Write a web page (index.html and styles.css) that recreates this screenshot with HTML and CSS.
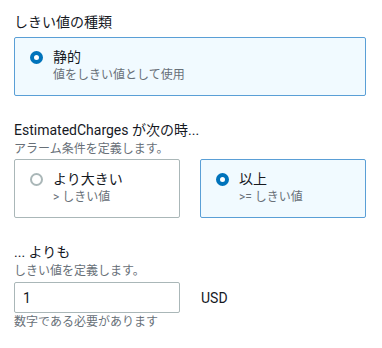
FILE: index.html
```html
<!DOCTYPE html>
<html lang="ja">

<head>
    <meta charset="UTF-8">
    <meta name="viewport" content="width=device-width, initial-scale=1.0">
    <title>しきい値</title>
    <link rel="stylesheet" href="styles.css">
</head>

<body>
    <div class="form">
        <div class="field">
            <div class="field-label first">しきい値の種類</div>
            <div class="tiles single">
                <label class="tile selected">
                    <span class="radio checked"></span>
                    <span class="tile-text">
                        <span class="tile-title">静的</span>
                        <span class="tile-sub">値をしきい値として使用</span>
                    </span>
                </label>
            </div>
        </div>

        <div class="field">
            <div class="field-label">EstimatedCharges が次の時...</div>
            <div class="field-desc">アラーム条件を定義します。</div>
            <div class="tiles">
                <label class="tile">
                    <span class="radio"></span>
                    <span class="tile-text">
                        <span class="tile-title">より大きい</span>
                        <span class="tile-sub">&gt; しきい値</span>
                    </span>
                </label>
                <label class="tile selected">
                    <span class="radio checked"></span>
                    <span class="tile-text">
                        <span class="tile-title">以上</span>
                        <span class="tile-sub">&gt;= しきい値</span>
                    </span>
                </label>
            </div>
        </div>

        <div class="field">
            <div class="field-label">... よりも</div>
            <div class="field-desc">しきい値を定義します。</div>
            <div class="input-row">
                <input class="text-input" type="text" value="1">
                <span class="unit">USD</span>
            </div>
            <div class="field-hint">数字である必要があります</div>
        </div>
    </div>
</body>

</html>
```

FILE: styles.css
```css
* {
    margin: 0;
    padding: 0;
    box-sizing: border-box;
}

body {
    background-color: #fff;
    color: #16191f;
    font-family: Roboto, "Noto Sans CJK JP", sans-serif;
    font-size: 14px;
}

.form {
    width: 352px;
    margin-left: 14px;
    padding-top: 12px;
}

.field {
    margin-bottom: 24px;
}

.field-label {
    font-size: 14px;
    line-height: 20px;
}

.field-label.first {
    margin-bottom: 5px;
}

.field-desc {
    font-size: 12px;
    line-height: 18px;
    color: #687078;
    margin-bottom: 1px;
}

.tiles {
    display: grid;
    grid-template-columns: 1fr 1fr;
    gap: 20px;
}

.tiles.single {
    grid-template-columns: 1fr;
}

.tile {
    display: flex;
    align-items: flex-start;
    height: 59px;
    padding: 9px 15px 12px;
    border: 1px solid #aab7b8;
    border-radius: 2px;
    background-color: #fff;
}

.tile.selected {
    border-color: #5a9fd6;
    background-color: #f1faff;
}

.radio {
    flex: none;
    width: 13px;
    height: 13px;
    margin-top: 4px;
    margin-right: 10px;
    border: 2px solid #aab7b8;
    border-radius: 50%;
    background-color: #fff;
}

.radio.checked {
    border: 4px solid #0073bb;
}

.tile-text {
    display: flex;
    flex-direction: column;
}

.tile-title {
    font-size: 14px;
    line-height: 20px;
}

.tile-sub {
    font-size: 12px;
    line-height: 16px;
    color: #687078;
}

.input-row {
    display: flex;
    align-items: center;
    margin-top: 2px;
}

.text-input {
    width: 166px;
    height: 31px;
    padding: 0 8px;
    border: 1px solid #aab7b8;
    border-radius: 2px;
    font-family: Roboto, "Noto Sans CJK JP", sans-serif;
    font-size: 14px;
    color: #16191f;
    outline: none;
}

.unit {
    margin-left: 21px;
    font-size: 14px;
}

.field-hint {
    font-size: 12px;
    line-height: 18px;
    color: #687078;
}
```
